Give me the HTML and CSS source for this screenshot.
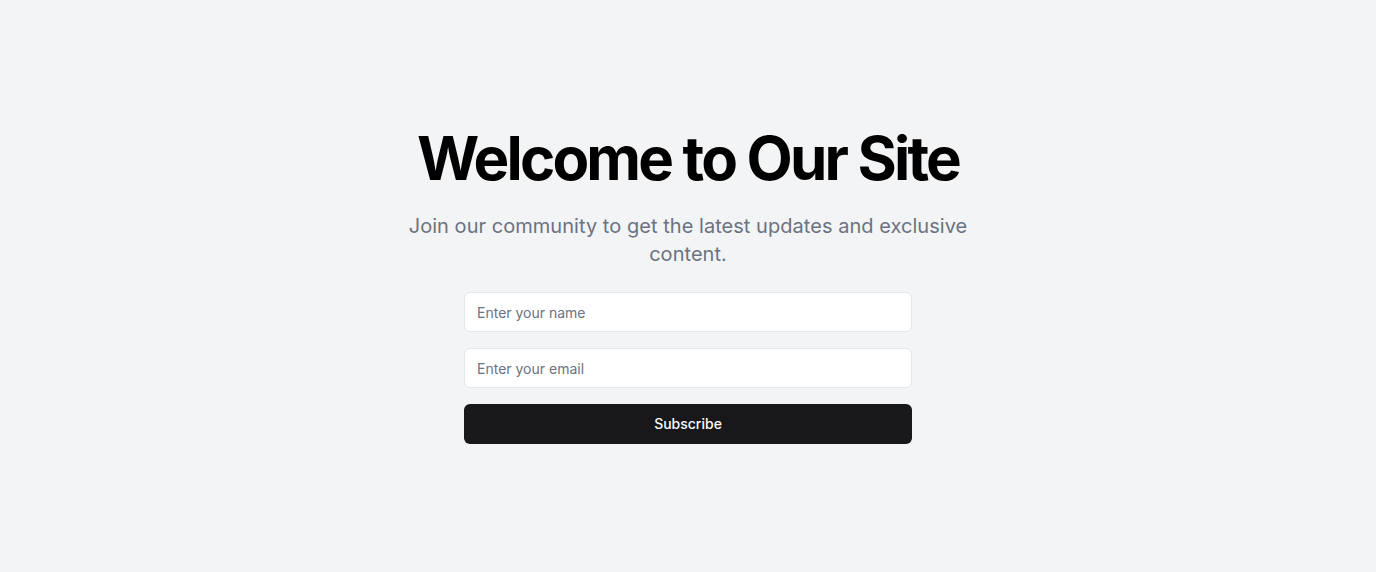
FILE: index.html
```html
<!DOCTYPE html>
<html lang="en">
<head>
<meta charset="utf-8">
<title>Welcome</title>
<link rel="stylesheet" href="styles.css">
</head>
<body>
<main class="page">
  <section class="hero">
    <h1 class="title">Welcome to Our Site</h1>
    <p class="subtitle">Join our community to get the latest updates and exclusive content.</p>
    <form class="form">
      <input class="field" type="text" placeholder="Enter your name">
      <input class="field" type="email" placeholder="Enter your email">
      <button class="btn" type="button">Subscribe</button>
    </form>
  </section>
</main>
</body>
</html>
```

FILE: styles.css
```css
* { box-sizing: border-box; }
html, body { margin: 0; padding: 0; }
body {
  background: #f3f4f6;
  font-family: Inter, "Noto Sans", sans-serif;
  color: #000;
}
.page {
  min-height: 100vh;
  display: flex;
  align-items: center;
  justify-content: center;
}
.hero {
  width: 576px;
  display: flex;
  flex-direction: column;
  align-items: center;
  text-align: center;
}
.title {
  margin: 0;
  font-size: 60px;
  line-height: 60px;
  font-weight: 700;
  letter-spacing: -0.047em;
}
.subtitle {
  margin: 24px 0 0;
  font-size: 20px;
  line-height: 28px;
  color: #6b7280;
  letter-spacing: 0.002em;
}
.form {
  margin-top: 24px;
  width: 448px;
  display: flex;
  flex-direction: column;
  gap: 16px;
}
.field {
  height: 40px;
  width: 100%;
  border: 1px solid #e5e7eb;
  border-radius: 6px;
  background: #fff;
  padding: 0 12px;
  font-family: inherit;
  font-size: 14px;
  color: #111;
}
.field::placeholder { color: #6b7280; }
.btn {
  height: 40px;
  width: 100%;
  border: none;
  border-radius: 6px;
  background: #18181b;
  color: #fafafa;
  font-family: inherit;
  font-size: 14px;
  font-weight: 500;
  line-height: 20px;
  padding: 0;
}
```
